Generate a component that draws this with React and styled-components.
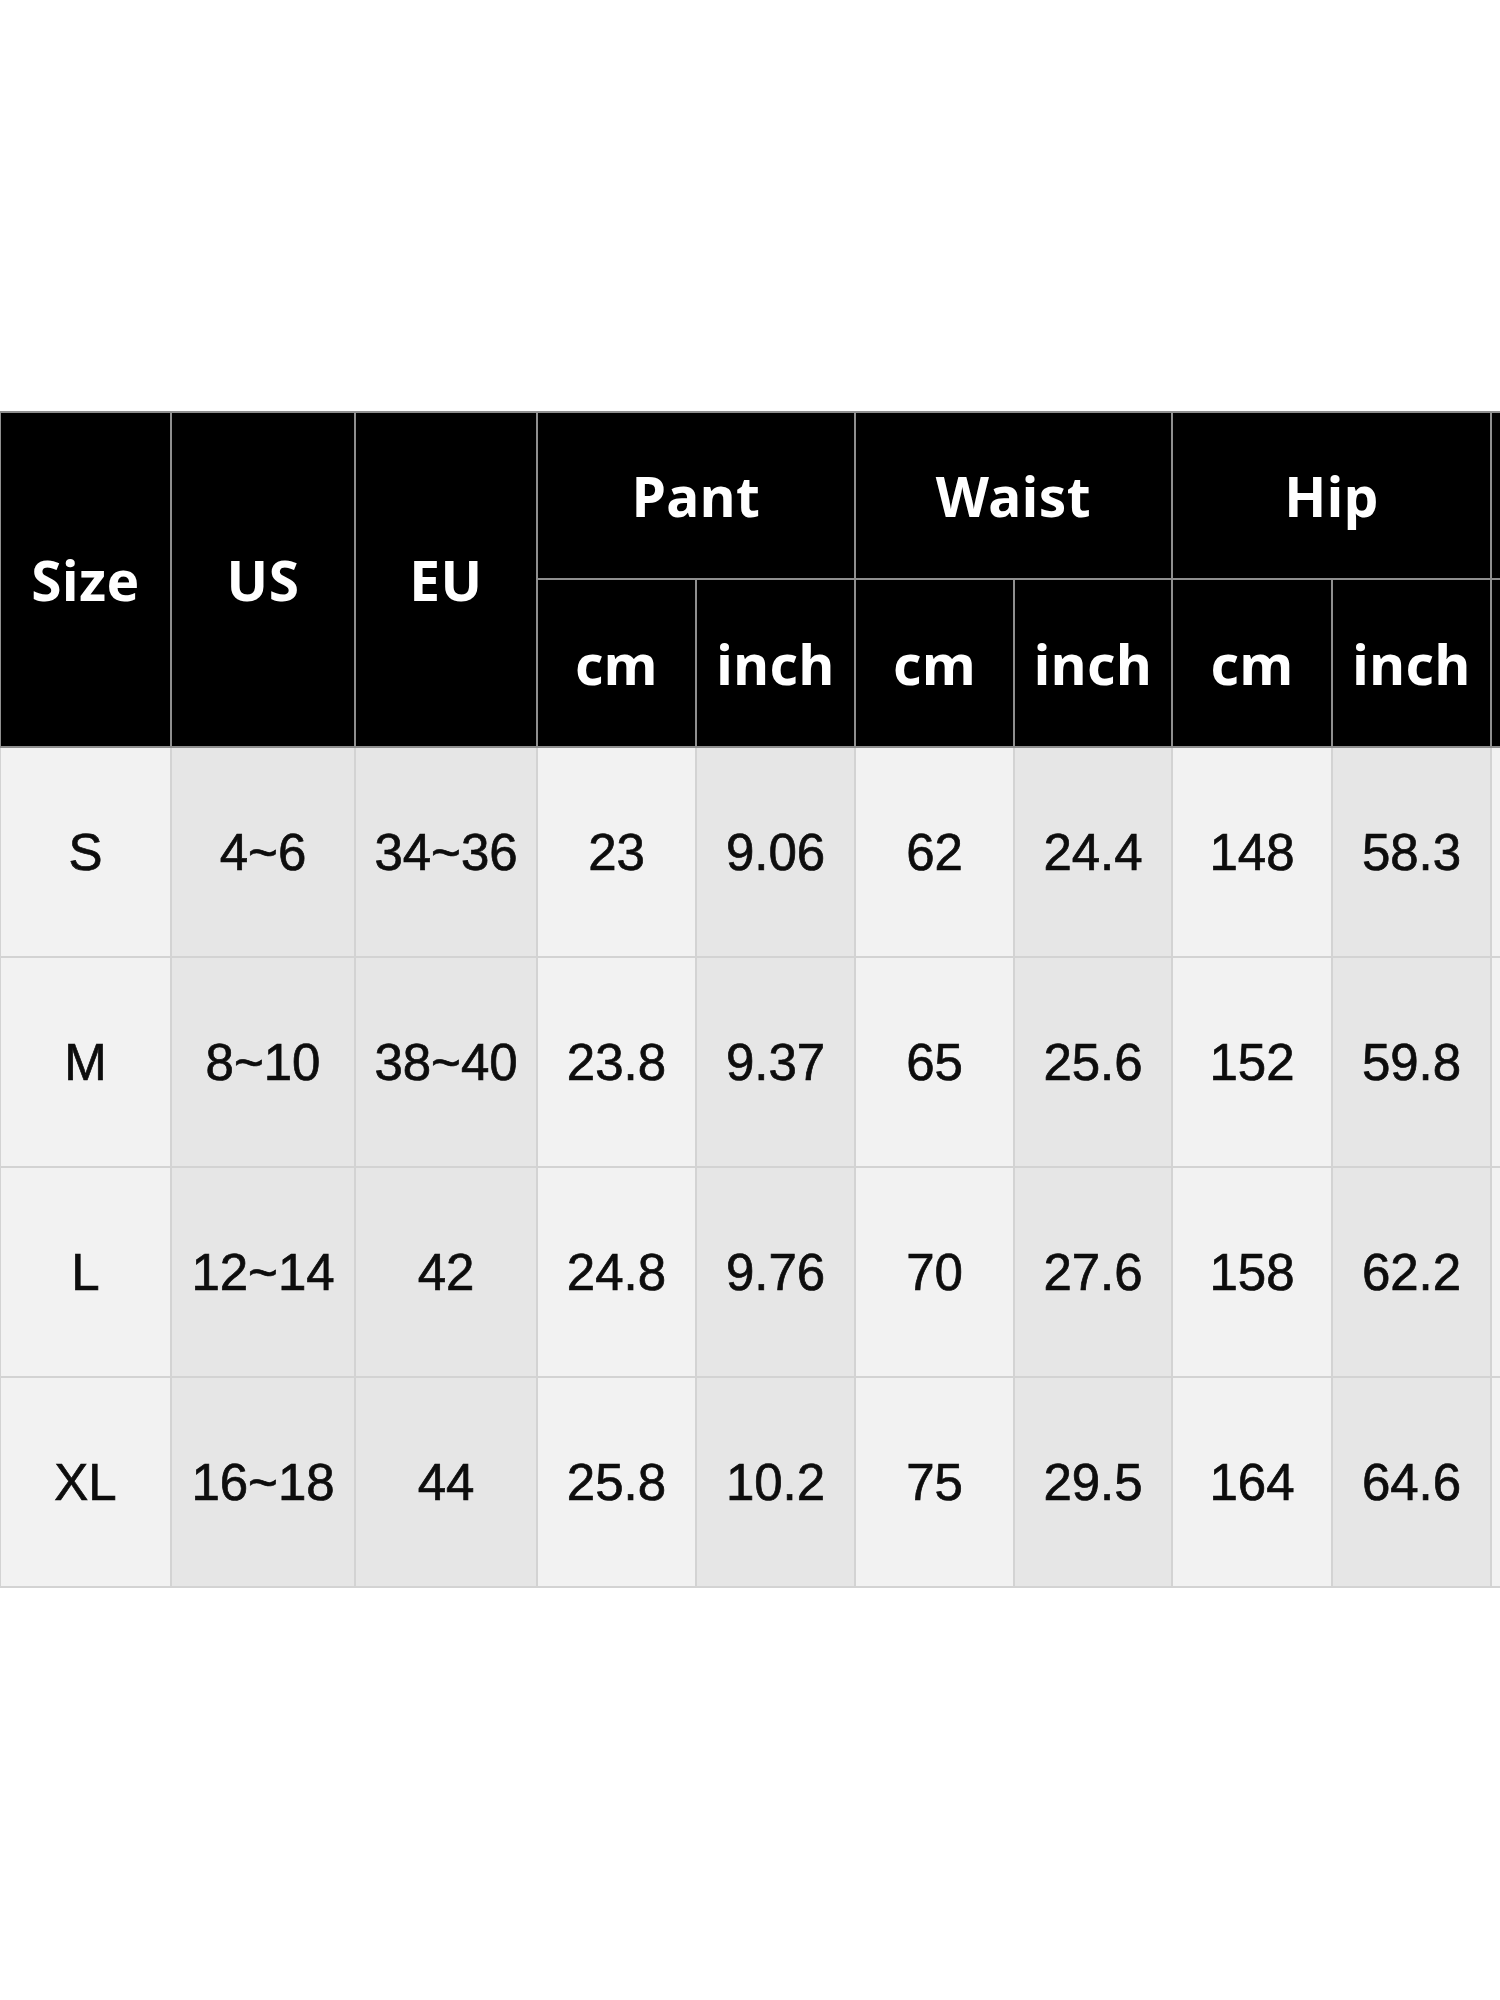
import React from 'react';
import styled, { createGlobalStyle } from 'styled-components';

const GlobalStyle = createGlobalStyle`
    html, body {
        margin: 0;
        padding: 0;
        background: #fff;
    }
`;

const Page = styled.div`
    width: 1500px;
    height: 2000px;
    padding-top: 411px;
    box-sizing: border-box;
    overflow: hidden;
    background: #fff;
`;

const Table = styled.table`
    table-layout: fixed;
    border-collapse: collapse;
    width: 1650px;
    margin-left: -1px;
`;

const HeadCell = styled.th`
    background: #000;
    color: #fff;
    font-family: "Noto Sans", "Open Sans", sans-serif;
    font-weight: 700;
    font-size: 55px;
    letter-spacing: 0.5px;
    text-align: center;
    vertical-align: middle;
    padding: 0;
    border: 2px solid #8f8f8f;
    height: ${p => p.$h}px;
    line-height: 1;
`;

const Cell = styled.td`
    background: ${p => (p.$shade ? '#e6e6e6' : '#f2f2f2')};
    color: #0d0d0d;
    font-family: "Liberation Sans", Arial, sans-serif;
    font-size: 51px;
    -webkit-text-stroke: 0.7px #0d0d0d;
    text-align: center;
    vertical-align: middle;
    padding: 0;
    height: 208px;
    border: 2px solid #d3d3d3;
    white-space: nowrap;
`;

const widths = [171, 184, 182, 159, 159, 159, 158, 160, 159, 159, 159];
// which columns are the darker grey
const shaded = [false, true, true, false, true, false, true, false, true, false, true];

const rows = [
    ['S', '4~6', '34~36', '23', '9.06', '62', '24.4', '148', '58.3'],
    ['M', '8~10', '38~40', '23.8', '9.37', '65', '25.6', '152', '59.8'],
    ['L', '12~14', '42', '24.8', '9.76', '70', '27.6', '158', '62.2'],
    ['XL', '16~18', '44', '25.8', '10.2', '75', '29.5', '164', '64.6'],
];

const groups = ['Pant', 'Waist', 'Hip', ''];

const App = () => {
    return (
        <Page>
            <GlobalStyle />
            <Table>
                <colgroup>
                    {widths.map((w, i) => <col key={i} style={{ width: w }} />)}
                </colgroup>
                <thead>
                    <tr>
                        <HeadCell rowSpan={2} $h={165}>Size</HeadCell>
                        <HeadCell rowSpan={2} $h={165}>US</HeadCell>
                        <HeadCell rowSpan={2} $h={165}>EU</HeadCell>
                        {groups.map((g, i) => (
                            <HeadCell key={i} colSpan={2} $h={165}>{g}</HeadCell>
                        ))}
                    </tr>
                    <tr>
                        {groups.map((g, i) => (
                            <React.Fragment key={i}>
                                <HeadCell $h={166}>{g ? 'cm' : ''}</HeadCell>
                                <HeadCell $h={166}>{g ? 'inch' : ''}</HeadCell>
                            </React.Fragment>
                        ))}
                    </tr>
                </thead>
                <tbody>
                    {rows.map((r, ri) => (
                        <tr key={ri}>
                            {r.map((v, ci) => (
                                <Cell key={ci} $shade={shaded[ci]}>{v}</Cell>
                            ))}
                            <Cell $shade={false}></Cell>
                            <Cell $shade={true}></Cell>
                        </tr>
                    ))}
                </tbody>
            </Table>
        </Page>
    );
};

export default App;
